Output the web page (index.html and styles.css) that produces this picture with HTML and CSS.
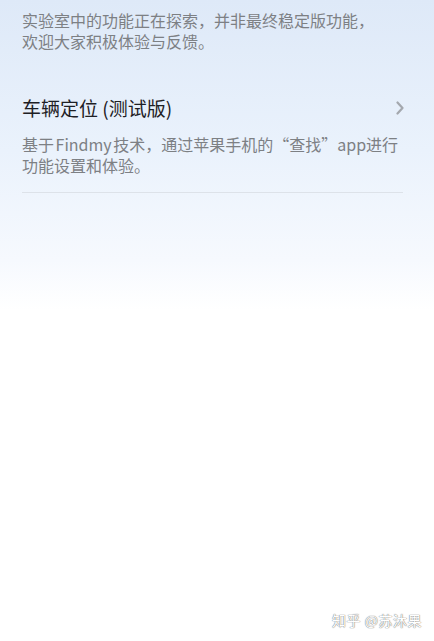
FILE: index.html
```html
<!DOCTYPE html>
<html lang="zh">
<head>
<meta charset="utf-8">
<link rel="stylesheet" href="styles.css">
</head>
<body>
<div class="page">
  <p class="intro">实验室中的功能正在探索，并非最终稳定版功能，<br>欢迎大家积极体验与反馈。</p>
  <div class="item">
    <div class="item-head">
      <span class="item-title">车辆定位 (测试版)</span>
      <svg class="chev" width="10" height="14" viewBox="0 0 10 14"><path d="M2.5 1.5 L7.5 7 L2.5 12.5" fill="none" stroke="#a4a8ae" stroke-width="2.2" stroke-linecap="round" stroke-linejoin="round"/></svg>
    </div>
    <p class="item-desc">基于 Findmy 技术，通过苹果手机的“查找”app进行<br>功能设置和体验。</p>
  </div>
  <div class="divider"></div>
  <div class="watermark">知乎 @苏沐果</div>
</div>
</body>
</html>
```
FILE: styles.css
```css
html, body {
  margin: 0;
  padding: 0;
}
body {
  width: 434px;
  height: 641px;
  overflow: hidden;
  font-family: "Noto Sans CJK SC", "Noto Sans", sans-serif;
  background: linear-gradient(to bottom, #dee9f8 0px, #eaf2fc 150px, #f6f9fe 260px, #ffffff 310px, #ffffff 641px);
}
.page {
  position: relative;
  height: 641px;
  padding: 10px 31px 0 22px;
  box-sizing: border-box;
}
.intro {
  margin: 0;
  font-size: 16px;
  line-height: 21px;
  color: #7d8084;
}
.item {
  margin-top: 43px;
}
.item-head {
  display: flex;
  align-items: center;
  justify-content: space-between;
  height: 26px;
}
.item-title {
  font-size: 19px;
  line-height: 26px;
  font-weight: 400;
  color: #1e2024;
}
.chev {
  display: block;
  margin-right: -2px;
}
.item-desc {
  margin: 13px 0 0;
  font-size: 16px;
  line-height: 21px;
  color: #7d8084;
  word-spacing: -2px;
}
.divider {
  margin-top: 16px;
  height: 1px;
  background: #dde2e9;
}
.watermark {
  position: absolute;
  right: 12px;
  bottom: 11px;
  font-size: 14px;
  color: #ffffff;
  text-shadow: 0 0 1px #777, 0 0 1px #777;
  letter-spacing: 0.5px;
}
```
